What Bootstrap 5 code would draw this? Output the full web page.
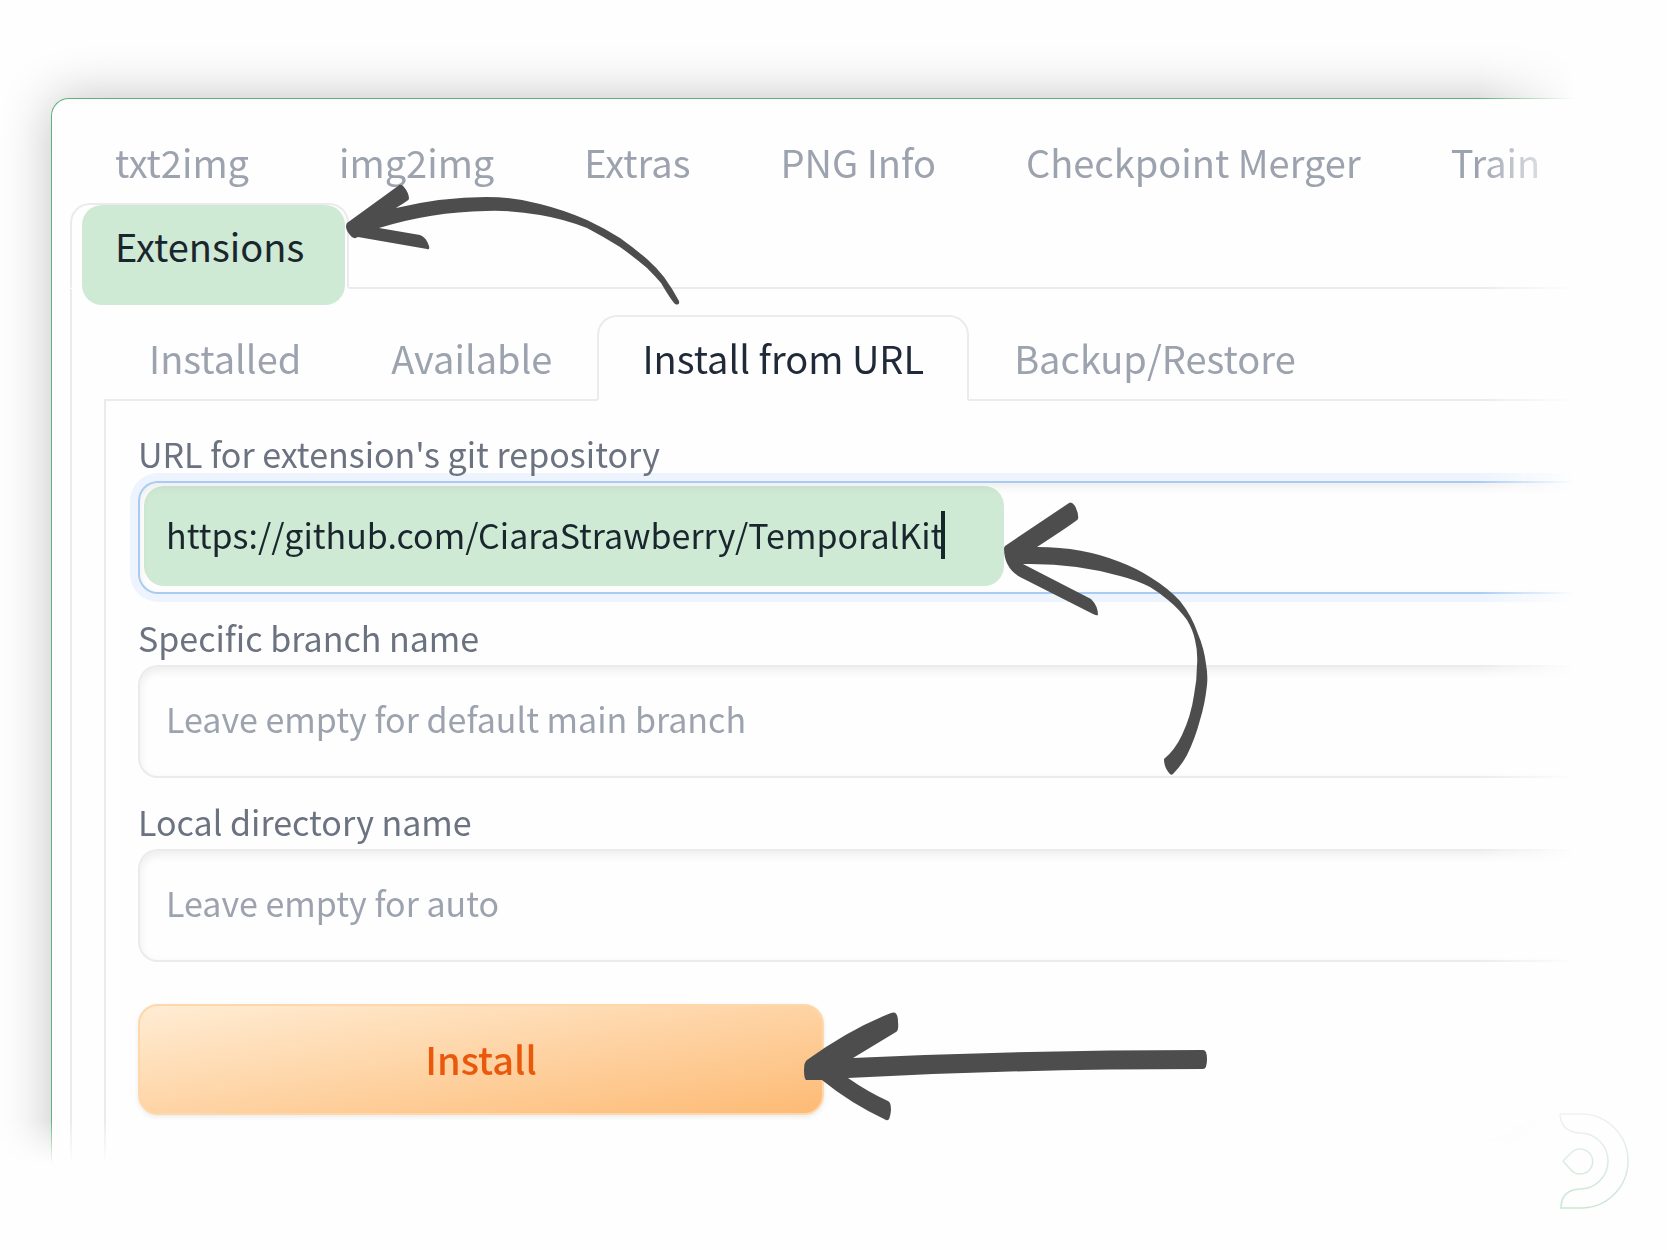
<!DOCTYPE html>
<html lang="en">
<head>
<meta charset="utf-8">
<meta name="viewport" content="width=device-width, initial-scale=1">
<title>Install extension from URL</title>
<link href="https://cdn.jsdelivr.net/npm/bootstrap@5.3.0/dist/css/bootstrap.min.css" rel="stylesheet">
<style>
  body { background: #fefefe; font-family: "Noto Sans CJK SC", sans-serif; }
  .stage { min-height: 100vh; overflow: hidden; }
  /* the window fades out towards the right and the bottom */
  .fade-right {
    -webkit-mask-image: linear-gradient(to right, #000 calc(100% - 190px), transparent calc(100% - 92px));
    mask-image: linear-gradient(to right, #000 calc(100% - 190px), transparent calc(100% - 92px));
  }
  .fade-bottom {
    min-height: 100vh; padding: 98px 0 80px 51px;
    -webkit-mask-image: linear-gradient(to bottom, #000 calc(100% - 130px), transparent calc(100% - 86px));
    mask-image: linear-gradient(to bottom, #000 calc(100% - 130px), transparent calc(100% - 86px));
  }
  .app-window {
    flex: 1; background: #fefefe; border: 1px solid #5cb377; border-width: 1px 0 0 1px;
    border-radius: 18px 0 0 0; box-shadow: 0 0 52px rgba(0,0,0,.24);
    padding: 20px 0 0 18px;
  }
  .nav-tabs { --bs-nav-tabs-border-width: 2px; --bs-nav-tabs-border-color: #ebebed; --bs-nav-tabs-border-radius: 20px;
    --bs-nav-tabs-link-active-border-color: #ebebed #ebebed #fefefe; --bs-nav-tabs-link-active-bg: #fefefe;
    --bs-nav-tabs-link-active-color: #1f2937; --bs-nav-link-color: #9ca3af; }
  .nav-tabs .nav-link { font-size: 38px; line-height: 48px; padding: 17px 43px; }
  .pane { border-left: 2px solid #ebebed; }
  .pane-outer { padding: 26px 0 0 32px; }
  .pane-inner { padding: 29px 0 50px 32px; }
  .form-label { position: relative; z-index: 1; font-size: 34px; line-height: 48px; color: #6b7280; margin-bottom: 3px; display: block; }
  .form-control { font-size: 34px; line-height: 48px; height: 113px; padding: 0 26px 6px; border: 2px solid #ebebed;
    border-radius: 20px 0 0 20px; border-right: 0; background: #fefefe; color: #1f2937; box-shadow: inset 0 4px 10px rgba(0,0,0,.07); }
  .form-control::placeholder { color: #9ca3af; }
  .field { margin-bottom: 20px; }
  .is-active { border-color: #a9cbf3; box-shadow: 0 0 0 8px #edf4fe, inset 0 4px 10px rgba(0,0,0,.07); }
  .marker { position: absolute; background: #d0ebd5; border-radius: 20px; mix-blend-mode: multiply; pointer-events: none; }
  .marker-tab { left: 12px; right: 4px; top: 2px; height: 100px; }
  .marker-url { left: 6px; top: 5px; width: 860px; height: 100px; }
  .text-cursor { position: absolute; left: 803px; top: 30px; width: 4px; height: 48px; background: #14282c; pointer-events: none; }
  .btn-install { width: 686px; max-width: 100%; height: 111px; margin-top: 22px; padding: 0 0 3px; font-size: 38px; font-weight: 500; color: #ea580c;
    border: 2px solid #fed7aa; border-radius: 20px; background: linear-gradient(to bottom right, #ffedd5, #fdba74) border-box;
    box-shadow: 0 2px 5px rgba(0,0,0,.08); }
  .btn-install:hover { color: #ea580c; border-color: #fed7aa; }
  .sketch { position: absolute; left: 0; top: 0; pointer-events: none; }
  .brand { position: absolute; right: 37px; bottom: 40px; }
</style>
</head>
<body>
<main class="stage position-relative">
  <div class="fade-right">
    <div class="fade-bottom d-flex">
      <section class="app-window">
        <nav>
          <ul class="nav nav-tabs">
            <li class="nav-item"><a class="nav-link" href="#">txt2img</a></li>
            <li class="nav-item"><a class="nav-link" href="#">img2img</a></li>
            <li class="nav-item"><a class="nav-link" href="#">Extras</a></li>
            <li class="nav-item"><a class="nav-link" href="#">PNG Info</a></li>
            <li class="nav-item"><a class="nav-link" href="#">Checkpoint Merger</a></li>
            <li class="nav-item"><a class="nav-link" href="#">Train</a></li>
            <li class="nav-item position-relative"><a class="nav-link active" aria-current="page" href="#">Extensions</a><span class="marker marker-tab"></span></li>
          </ul>
        </nav>
        <div class="pane pane-outer">
          <ul class="nav nav-tabs">
            <li class="nav-item"><a class="nav-link" href="#">Installed</a></li>
            <li class="nav-item"><a class="nav-link" href="#">Available</a></li>
            <li class="nav-item"><a class="nav-link active" href="#">Install from URL</a></li>
            <li class="nav-item"><a class="nav-link" href="#">Backup/Restore</a></li>
          </ul>
          <form class="pane pane-inner">
            <div class="field">
              <label class="form-label" for="repo">URL for extension's git repository</label>
              <div class="position-relative">
                <input class="form-control is-active" id="repo" type="text" spellcheck="false" value="https://github.com/CiaraStrawberry/TemporalKit">
                <span class="marker marker-url"></span>
                <span class="text-cursor"></span>
              </div>
            </div>
            <div class="field">
              <label class="form-label" for="branch">Specific branch name</label>
              <input class="form-control" id="branch" type="text" placeholder="Leave empty for default main branch">
            </div>
            <div class="field">
              <label class="form-label" for="dir">Local directory name</label>
              <input class="form-control" id="dir" type="text" placeholder="Leave empty for auto">
            </div>
            <button class="btn btn-install" type="button">Install</button>
          </form>
        </div>
      </section>
    </div>
  </div>

  <!-- hand-drawn arrows -->
  <svg class="sketch" width="1667" height="1250" viewBox="0 0 1667 1250" fill="#4d4d4d" aria-hidden="true">
    <path d="M347 223 L398 186 Q401 183 404 187 Q409 193 409 199 Q409 200 396 208 Q442 197 486 197 Q514 197 540 204 Q564 210 587 220 Q604 228 620 238 Q634 248 647 259 Q656 267 664 277 Q672 288 679 301 Q680 306 675 304 Q671 300 661 283 Q655 276 647 268 Q634 257 620 247 Q604 237 587 228 Q564 219 540 215 Q512 210 486 211 Q431 212 379 228 L420 235 Q426 237 429 246 Q430 250 427 249 L358 237 Q353 240 350 235 Q344 228 347 223Z"/>
    <path d="M1005 546 L1069 503 Q1072 501 1075 506 Q1079 514 1078 519 Q1077 521 1037 547 Q1083 547 1120 562 Q1136 568 1150 577 Q1168 588 1180 601 Q1192 616 1198 634 Q1204 648 1206 664 Q1208 675 1207 685 Q1205 704 1200 720 Q1195 739 1187 755 Q1181 766 1173 774 Q1171 776 1169 773 Q1164 767 1164 759 Q1175 750 1182 735 Q1191 716 1194 695 Q1197 680 1197 665 Q1198 652 1195 640 Q1193 630 1187 620 Q1179 609 1168 600 Q1160 593 1150 587 Q1136 580 1120 576 Q1075 563 1023 564 L1091 599 Q1098 606 1098 615 Q1097 616 1093 614 L1020 577 Q1004 568 1004 548Z"/>
    <path d="M807 1060 Q850 1029 891 1013 Q898 1010 898 1022 Q899 1030 896 1032 L853 1058 Q1030 1050 1203 1050 Q1207 1050 1207 1059 Q1207 1069 1203 1069 Q1020 1069 848 1078 Q868 1092 888 1101 Q891 1102 891 1110 Q890 1122 886 1120 Q850 1103 822 1080 L806 1080 Q804 1078 804 1070 Q804 1062 807 1060Z"/>
  </svg>

  <svg class="brand" width="72" height="98" viewBox="1559 1112 72 98" fill="none" stroke="url(#leaf)" stroke-width="1.5" aria-hidden="true">
    <defs><linearGradient id="leaf" gradientUnits="userSpaceOnUse" x1="0" y1="1112" x2="0" y2="1210"><stop offset="0" stop-color="#f0f2f0"/><stop offset="1" stop-color="#c9e6d1"/></linearGradient></defs>
    <path d="M1561 1114 H1582 A47 47 0 0 1 1582 1208 H1562 Q1562 1190 1581 1189 A28 28 0 0 0 1581 1133 Q1562 1132 1561 1114Z"/>
    <path d="M1564 1161 L1572 1153 A12.5 12.5 0 1 1 1572 1170Z"/>
  </svg>
</main>
<script src="https://cdn.jsdelivr.net/npm/bootstrap@5.3.0/dist/js/bootstrap.bundle.min.js"></script>
</body>
</html>
